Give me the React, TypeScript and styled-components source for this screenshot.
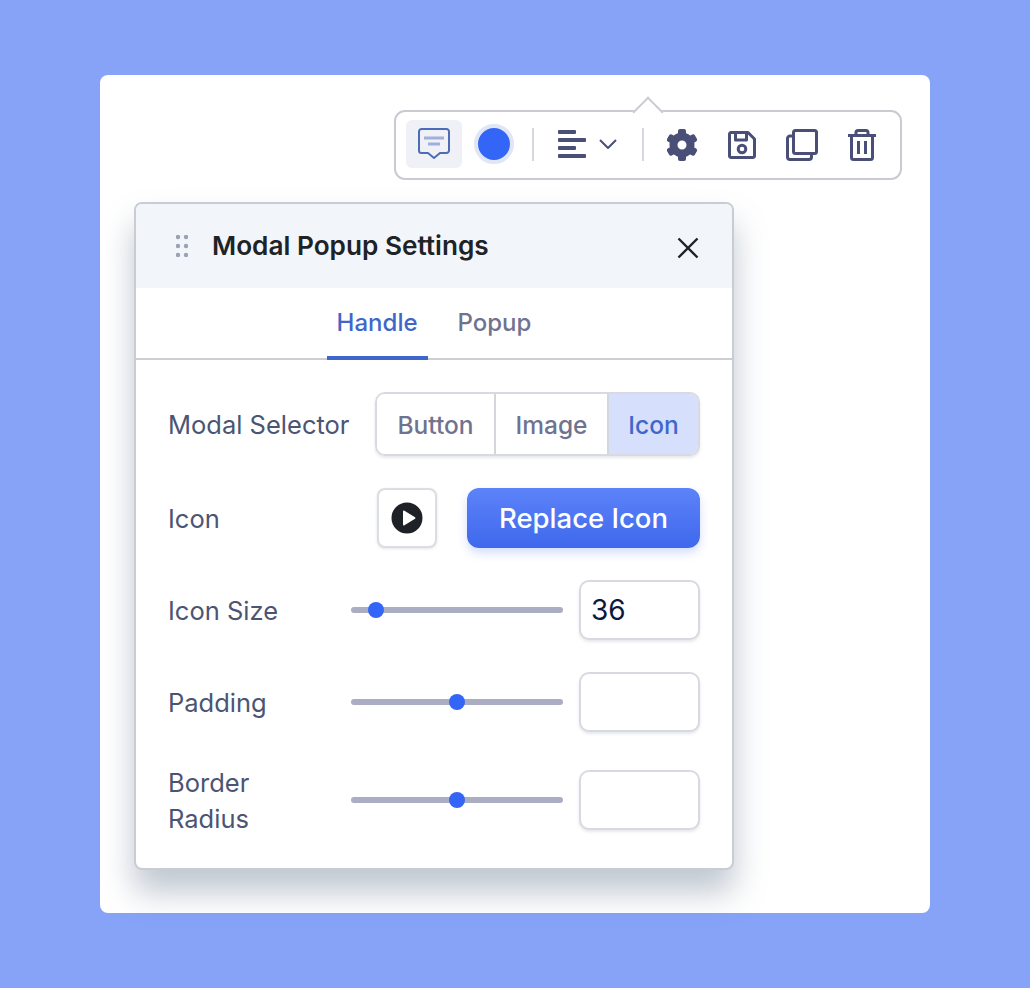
import React from 'react'
import styled, { createGlobalStyle } from 'styled-components'

const GlobalStyle = createGlobalStyle`
  html, body {
    margin: 0;
    background: #86a3f8;
    font-family: Inter, 'Noto Sans', sans-serif;
  }
  * {
    box-sizing: border-box;
  }
`

const Page = styled.div`
  width: 1030px;
  height: 988px;
  padding: 75px 100px;
`

const Card = styled.div`
  width: 830px;
  height: 838px;
  padding: 35px 28px 0 34px;
  background: #fff;
  border-radius: 8px;
`

const Toolbar = styled.div`
  position: relative;
  display: flex;
  align-items: center;
  width: 508px;
  height: 70px;
  margin-left: auto;
  padding: 0 10px 2px;
  background: #fff;
  border: 2px solid #c9cbd1;
  border-radius: 11px;

  &::before {
    content: '';
    position: absolute;
    top: -11px;
    left: 241px;
    width: 20px;
    height: 20px;
    background: #fff;
    border-top: 2px solid #c9cbd1;
    border-left: 2px solid #c9cbd1;
    transform: rotate(45deg);
  }
`

const ToolButton = styled.div`
  display: flex;
  align-items: center;
  justify-content: center;
  width: 56px;
  height: 48px;
  background: #f0f1f6;
  border-radius: 6px;
`

const Swatch = styled.div`
  width: 40px;
  height: 40px;
  margin: 0 18px 0 12px;
  background: #3366f6;
  border: 4px solid #e0e6f6;
  border-radius: 50%;
`

const Divider = styled.div`
  flex: none;
  width: 2px;
  height: 33px;
  background: #d6d8dd;
`

const AlignGroup = styled.div`
  display: flex;
  align-items: center;
  gap: 13px;
  margin: 0 25px 0 24px;
`

const ActionGroup = styled.div`
  display: flex;
  align-items: center;
  gap: 30px;
  margin: 2px 0 0 23px;
`

const Panel = styled.div`
  width: 600px;
  margin-top: 22px;
  background: #fff;
  border: 2px solid #c9ccd2;
  border-radius: 8px;
  box-shadow: 0 22px 32px rgba(96, 116, 138, 0.4);
  overflow: hidden;
`

const PanelHeader = styled.div`
  display: flex;
  align-items: center;
  height: 84px;
  padding: 0 33px 0 40px;
  background: #f2f6fb;
`

const Title = styled.h2`
  flex: 1;
  margin: 0 0 0 24px;
  color: #1d2327;
  font-size: 26.2px;
  font-weight: 600;
  line-height: 1;
`

const CloseSlot = styled.div`
  display: flex;
  margin-top: 4px;
`

const Tabs = styled.div`
  display: flex;
  justify-content: center;
  gap: 20px;
  height: 72px;
  border-bottom: 2px solid #ccced4;
`

const Tab = styled.div<{ $active?: boolean }>`
  display: flex;
  align-items: center;
  height: 72px;
  padding: 0 10px;
  color: ${({ $active }) => ($active ? '#3f67cb' : '#6f7390')};
  font-size: 24px;
  font-weight: 500;
  border-bottom: 4px solid ${({ $active }) => ($active ? '#3f67cb' : 'transparent')};
`

const PanelBody = styled.div`
  display: flex;
  flex-direction: column;
  gap: 32px;
  padding: 32px;
`

const Row = styled.div`
  display: flex;
  align-items: center;
`

const Label = styled.div<{ $width?: number }>`
  flex: ${({ $width }) => ($width ? 'none' : 1)};
  width: ${({ $width }) => ($width ? `${$width}px` : 'auto')};
  margin-bottom: -1px;
  padding-top: 1px;
  color: #4b5573;
  font-size: 25.5px;
  line-height: 36px;
`

const Segmented = styled.div`
  display: flex;
  height: 64px;
  border: 2px solid #d9dae1;
  border-radius: 10px;
  box-shadow: 0 2px 3px rgba(120, 128, 150, 0.18);
  overflow: hidden;
`

const Segment = styled.div<{ $active?: boolean; $width: number }>`
  display: flex;
  align-items: center;
  justify-content: center;
  width: ${({ $width }) => $width}px;
  padding-top: 1px;
  color: ${({ $active }) => ($active ? '#3f67cb' : '#6f7390')};
  background: ${({ $active }) => ($active ? '#d6dffb' : '#fff')};
  font-size: 24.5px;
  font-weight: 500;

  & + & {
    border-left: 2px solid #d4d6de;
  }
`

const IconPreview = styled.div`
  display: flex;
  align-items: center;
  justify-content: center;
  width: 60px;
  height: 60px;
  background: #fff;
  border: 2px solid #dcdde3;
  border-radius: 8px;
  box-shadow: 0 1px 3px rgba(120, 128, 150, 0.2);
`

const ReplaceButton = styled.button`
  width: 233px;
  height: 60px;
  margin-left: 30px;
  padding: 0;
  color: #fff;
  background: linear-gradient(180deg, #5c83f9 0%, #3f68ec 100%);
  border: 0;
  border-radius: 12px;
  box-shadow: 0 5px 10px rgba(80, 115, 240, 0.24);
  font-family: inherit;
  font-size: 27.5px;
  font-weight: 500;
`

const Slider = styled.div`
  position: relative;
  flex: 1;
  height: 6px;
  background: #abaec2;
  border-radius: 3px;
`

const Thumb = styled.div`
  position: absolute;
  top: -5px;
  width: 16px;
  height: 16px;
  margin-left: -8px;
  background: #3366f6;
  border-radius: 50%;
`

const NumberInput = styled.input`
  width: 121px;
  height: 60px;
  margin-left: 16px;
  padding: 0 10px;
  color: #0b1840;
  background: #fff;
  border: 2px solid #d9dae1;
  border-radius: 10px;
  box-shadow: 0 2px 3px rgba(120, 128, 150, 0.18);
  font-family: inherit;
  font-size: 28px;
  outline: none;
`

const ChatIcon = () => (
  <svg width="32" height="32" viewBox="0 0 32 32" fill="none">
    <path
      d="M3.500 1h25A2.500 2.500 0 0 1 31 3.500v19a2.500 2.500 0 0 1-2.500 2.500H22l-6 5-6-5H3.500A2.500 2.500 0 0 1 1 22.500v-19A2.500 2.500 0 0 1 3.500 1z"
      stroke="#4c6cb8"
      strokeWidth="2"
      strokeLinejoin="round"
    />
    <path d="M6 10h20M10 16h12" stroke="#9fb0dc" strokeWidth="3" />
  </svg>
)

const AlignIcon = () => (
  <svg width="28" height="28" viewBox="0 0 28 28" fill="#4a4f78">
    <rect x="0" y="0" width="18" height="4" rx="1" />
    <rect x="0" y="8" width="28" height="4" rx="1" />
    <rect x="0" y="16" width="18" height="4" rx="1" />
    <rect x="0" y="24" width="28" height="4" rx="1" />
  </svg>
)

const ChevronIcon = () => (
  <svg width="18" height="10" viewBox="0 0 18 10" fill="none">
    <path d="M1 1l8 8 8-8" stroke="#4a4f78" strokeWidth="2" />
  </svg>
)

const GearIcon = () => (
  <svg width="31" height="32" viewBox="0 0 31 32" fill="none">
    {[0, 60, 120, 180, 240, 300].map((deg) => (
      <rect key={deg} x="11" y="0" width="8" height="8" rx="2" fill="#4a4f78" transform={`rotate(${deg} 15 16)`} />
    ))}
    <circle cx="15" cy="16" r="8.500" stroke="#4a4f78" strokeWidth="8" />
  </svg>
)

const SaveIcon = () => (
  <svg width="28" height="28" viewBox="0 0 28 28" fill="none" stroke="#4a4f78" strokeWidth="3" strokeLinejoin="round">
    <path d="M3 1.500h17l6.500 6.500v17a1.500 1.500 0 0 1-1.500 1.500H3A1.500 1.500 0 0 1 1.500 25V3A1.500 1.500 0 0 1 3 1.500z" />
    <path d="M7.500 2v7h11V2" />
    <circle cx="14" cy="18" r="3.800" />
  </svg>
)

const CopyIcon = () => (
  <svg width="32" height="32" viewBox="0 0 32 32" fill="none" stroke="#4a4f78" strokeWidth="3" strokeLinejoin="round">
    <rect x="7.500" y="1.500" width="23" height="23" rx="2" />
    <path d="M7.500 7H4a2.500 2.500 0 0 0-2.500 2.500V28A2.500 2.500 0 0 0 4 30.500h19a2.500 2.500 0 0 0 2.500-2.500v-3.500" />
  </svg>
)

const TrashIcon = () => (
  <svg width="28" height="32" viewBox="0 0 28 32" fill="none" stroke="#4a4f78" strokeWidth="3" strokeLinejoin="round">
    <path d="M0 6.500h28" />
    <path d="M8 6V3.500A2 2 0 0 1 10 1.500h8a2 2 0 0 1 2 2V6" />
    <path d="M3.500 7v21.500a2 2 0 0 0 2 2h17a2 2 0 0 0 2-2V7" />
    <path d="M10.500 12v13M17.500 12v13" />
  </svg>
)

const DragIcon = () => (
  <svg width="12" height="22" viewBox="0 0 12 22" fill="#9aa3b4">
    {[2, 11, 20].map((cy) => (
      <React.Fragment key={cy}>
        <circle cx="2" cy={cy} r="2.200" />
        <circle cx="10" cy={cy} r="2.200" />
      </React.Fragment>
    ))}
  </svg>
)

const CloseIcon = () => (
  <svg width="22" height="22" viewBox="0 0 22 22" fill="none">
    <path d="M1.500 1.500l19 19M20.500 1.500l-19 19" stroke="#1d2327" strokeWidth="2.400" />
  </svg>
)

const PlayIcon = () => (
  <svg width="32" height="32" viewBox="0 0 32 32">
    <circle cx="16" cy="16" r="15.500" fill="#1e2126" />
    <path d="M12 9.500v13a1 1 0 0 0 1.500.8l10.500-6.500a1 1 0 0 0 0-1.600L13.500 8.700a1 1 0 0 0-1.500.8z" fill="#fff" />
  </svg>
)

const sliderRows = [
  { label: 'Icon Size', percent: 11.8, value: '36' },
  { label: 'Padding', percent: 50, value: '' },
  { label: 'Border Radius', percent: 50, value: '' },
]

export default function App() {
  return (
    <>
      <GlobalStyle />
      <Page>
        <Card>
          <Toolbar>
            <ToolButton>
              <ChatIcon />
            </ToolButton>
            <Swatch />
            <Divider />
            <AlignGroup>
              <AlignIcon />
              <ChevronIcon />
            </AlignGroup>
            <Divider />
            <ActionGroup>
              <GearIcon />
              <SaveIcon />
              <CopyIcon />
              <TrashIcon />
            </ActionGroup>
          </Toolbar>

          <Panel>
            <PanelHeader>
              <DragIcon />
              <Title>Modal Popup Settings</Title>
              <CloseSlot>
                <CloseIcon />
              </CloseSlot>
            </PanelHeader>
            <Tabs>
              <Tab $active>Handle</Tab>
              <Tab>Popup</Tab>
            </Tabs>
            <PanelBody>
              <Row>
                <Label>Modal Selector</Label>
                <Segmented>
                  <Segment $width={117}>Button</Segment>
                  <Segment $width={113}>Image</Segment>
                  <Segment $width={91} $active>Icon</Segment>
                </Segmented>
              </Row>
              <Row>
                <Label>Icon</Label>
                <IconPreview>
                  <PlayIcon />
                </IconPreview>
                <ReplaceButton>Replace Icon</ReplaceButton>
              </Row>
              {sliderRows.map((row) => (
                <Row key={row.label}>
                  <Label $width={183}>{row.label === 'Border Radius' ? <>Border<br />Radius</> : row.label}</Label>
                  <Slider>
                    <Thumb style={{ left: `${row.percent}%` }} />
                  </Slider>
                  <NumberInput readOnly value={row.value} />
                </Row>
              ))}
            </PanelBody>
          </Panel>
        </Card>
      </Page>
    </>
  )
}
